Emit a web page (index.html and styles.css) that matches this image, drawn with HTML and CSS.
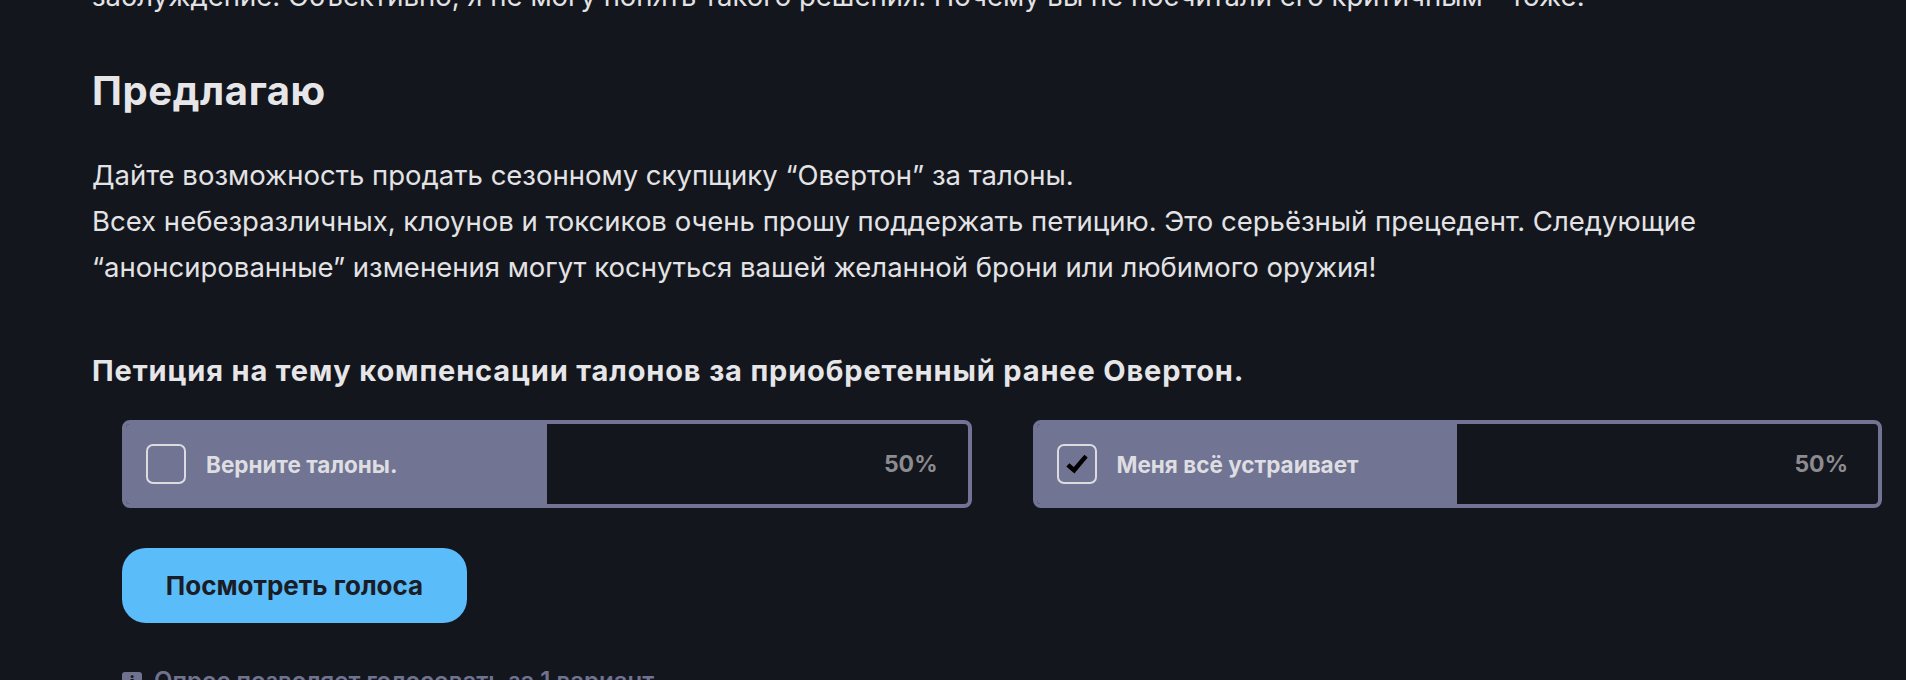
FILE: index.html
```html
<!DOCTYPE html>
<html lang="ru">
<head>
<meta charset="utf-8">
<title>Петиция</title>
<link rel="stylesheet" href="styles.css">
</head>
<body>
<main class="page">
  <p class="text prev">заблуждение. Объективно, я не могу понять такого решения. Почему вы не посчитали его критичным - тоже.</p>
  <h2 class="heading">Предлагаю</h2>
  <p class="text body">Дайте возможность продать сезонному скупщику “Овертон” за талоны.<br>Всех небезразличных, клоунов и токсиков очень прошу поддержать петицию. Это серьёзный прецедент. Следующие<br>“анонсированные” изменения могут коснуться вашей желанной брони или любимого оружия!</p>

  <section class="poll">
    <h3 class="poll-title">Петиция на тему компенсации талонов за приобретенный ранее Овертон.</h3>
    <div class="poll-body">
      <div class="options">
        <div class="option">
          <div class="fill" style="width:50%"></div>
          <div class="option-row">
            <span class="check"></span>
            <span class="label">Верните талоны.</span>
            <span class="percent">50%</span>
          </div>
        </div>
        <div class="option">
          <div class="fill" style="width:50%"></div>
          <div class="option-row">
            <span class="check">
              <svg class="tick" viewBox="0 0 22 20" width="22" height="20" aria-hidden="true"><path d="M0.3 12.4 L3.4 9.2 L7.8 12.9 L18.4 0.8 L21.7 3.4 L8.4 19.4 Z"/></svg>
            </span>
            <span class="label">Меня всё устраивает</span>
            <span class="percent">50%</span>
          </div>
        </div>
      </div>
      <button class="votes-btn" type="button">Посмотреть голоса</button>
      <p class="note"><span class="note-icon">i</span>Опрос позволяет голосовать за 1 вариант.</p>
    </div>
  </section>
</main>
</body>
</html>
```

FILE: styles.css
```css
* { box-sizing: border-box; }

html {
  background: #14161e;
  overflow: hidden;
}

body {
  margin: 0;
  padding: 0;
  font-family: Inter, "Noto Sans", "Liberation Sans", sans-serif;
  color: #e3e3e5;
}

.page {
  padding: 1px 24px 0 92px;
}

.text {
  font-size: 27.5px;
  line-height: 46px;
  font-weight: 400;
  margin: 0;
}

.prev {
  margin-top: -28px;
  white-space: nowrap;
}

.heading {
  font-size: 40px;
  line-height: 48px;
  font-weight: 700;
  letter-spacing: 0.6px;
  margin: 48px 0 0;
  color: #e6e6e8;
}

.body {
  margin-top: 37px;
}

.poll-title {
  font-size: 29px;
  line-height: 36px;
  font-weight: 700;
  letter-spacing: 0.85px;
  margin: 63px 0 0;
  color: #e6e6e8;
}

.poll-body {
  padding-left: 30px;
  padding-top: 31px;
}

.options {
  display: flex;
  gap: 61px;
}

.option {
  flex: 1 1 0;
  display: grid;
  height: 88px;
  border: 4px solid #717593;
  border-radius: 8px;
  background: #14161e;
  overflow: hidden;
}

.fill,
.option-row {
  grid-area: 1 / 1;
}

.fill {
  background: #717593;
  justify-self: start;
  height: 100%;
}

.option-row {
  display: flex;
  align-items: center;
  padding: 0 30px 0 20px;
}

.check {
  width: 40px;
  height: 40px;
  border: 2px solid #dcdce0;
  border-radius: 7px;
  display: flex;
  align-items: center;
  justify-content: center;
  flex: none;
}

.tick {
  fill: #000;
  display: block;
}

.label {
  margin-left: 20px;
  font-size: 22.5px;
  font-weight: 700;
  color: #dedee2;
  flex: 1;
}

.percent {
  font-size: 23px;
  font-weight: 700;
  color: #8c8c90;
}

.votes-btn {
  margin-top: 40px;
  width: 345px;
  height: 75px;
  border: none;
  border-radius: 24px;
  background: #5bbcfa;
  color: #1a1d26;
  font-family: inherit;
  font-size: 26px;
  font-weight: 700;
  padding: 0;
  cursor: pointer;
  display: block;
}

.note {
  margin: 44px 0 0;
  display: flex;
  align-items: flex-start;
  gap: 12px;
  font-size: 24px;
  line-height: 28px;
  font-weight: 600;
  color: #6f7390;
}

.note-icon {
  width: 20px;
  height: 20px;
  border-radius: 3px;
  background: #6f7390;
  color: #14161e;
  font-size: 16px;
  line-height: 20px;
  text-align: center;
  font-weight: 900;
  flex: none;
  margin-top: 5px;
}
```
